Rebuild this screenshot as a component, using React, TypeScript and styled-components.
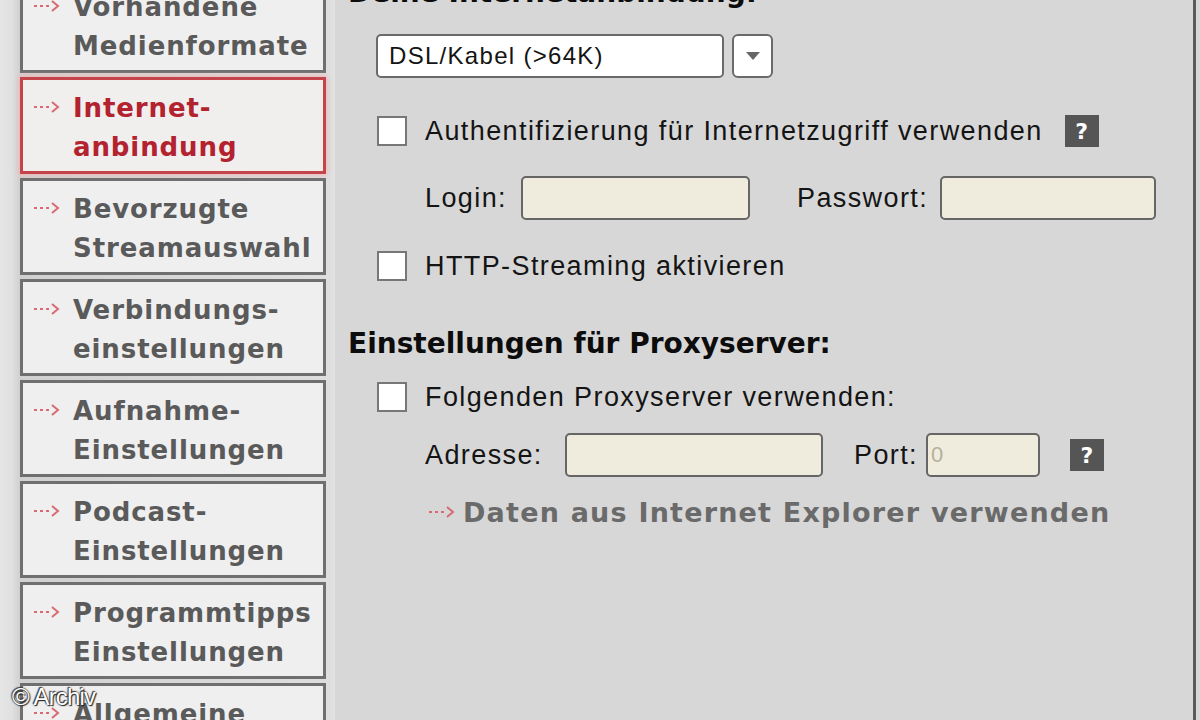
import styled, { createGlobalStyle } from "styled-components";

const GlobalStyle = createGlobalStyle`
  html, body {
    margin: 0;
    padding: 0;
    width: 1200px;
    height: 720px;
    overflow: hidden;
    background: #d7d7d7;
  }
  * {
    box-sizing: border-box;
  }
`;

const Page = styled.div`
  position: relative;
  display: flex;
  width: 1200px;
  height: 720px;
  overflow: hidden;
`;

const Frame = styled.div`
  display: flex;
  width: 1200px;
  margin-top: -24px;
  height: 760px;
`;

const Sidebar = styled.nav`
  width: 335px;
  flex-shrink: 0;
  display: flex;
  flex-direction: column;
  gap: 4px;
  padding-left: 20px;
  background: linear-gradient(90deg, #e6e6e6 0px, #e0e0e0 12px, #d0d0d0 20px, #dedede 330px, #e2e2e2 335px);
`;

const NavButton = styled.div<{ $active?: boolean }>`
  width: 306px;
  height: 97px;
  flex-shrink: 0;
  display: flex;
  align-items: flex-start;
  gap: 12px;
  padding: 9px 0 0 10px;
  background: ${(p) => (p.$active ? "#f1eeee" : "#efefef")};
  border: ${(p) => (p.$active ? "3px solid #c4444a" : "3px solid #6f6f6f")};
  box-shadow: ${(p) => (p.$active ? "0 0 5px 1px #f2b4b4" : "none")};
`;

const NavText = styled.div<{ $active?: boolean }>`
  font-family: "DejaVu Sans", Verdana, sans-serif;
  font-weight: bold;
  font-size: 26px;
  line-height: 39px;
  letter-spacing: 0.9px;
  color: ${(p) => (p.$active ? "#b3222f" : "#5a5a5a")};
  white-space: nowrap;
`;

const ArrowWrap = styled.span`
  display: flex;
  align-items: center;
  height: 36px;
  flex-shrink: 0;
`;

const Arrow = ({ width = 28 }: { width?: number }) => (
  <svg width={width} height="14" viewBox="0 0 28 14">
    <g fill="#d86a72">
      <rect x="1" y="6" width="3" height="2" />
      <rect x="7" y="6" width="3" height="2" />
      <rect x="13" y="6" width="3" height="2" />
    </g>
    <path d="M19 2 L25 7 L19 12" fill="none" stroke="#d86a72" strokeWidth="2" />
  </svg>
);

const Main = styled.main`
  flex: 1;
  display: flex;
  flex-direction: column;
  padding: 0 0 0 13px;
  border-right: 3px solid #5a5a5a;
  margin-right: 4px;
  font-family: "Liberation Sans", Tahoma, sans-serif;
  font-size: 27px;
  letter-spacing: 1.4px;
  color: #141414;
`;

const Heading = styled.h2<{ $mt?: number }>`
  margin: ${(p) => p.$mt ?? 0}px 0 0 0;
  font-family: "DejaVu Sans", Verdana, sans-serif;
  font-weight: bold;
  font-size: 28px;
  line-height: 34px;
  height: 34px;
  letter-spacing: 0;
  color: #0c0c0c;
  white-space: nowrap;
`;

const SelectRow = styled.div`
  display: flex;
  gap: 8px;
  margin: 24px 0 0 28px;
`;

const SelectBox = styled.div`
  width: 348px;
  height: 44px;
  display: flex;
  align-items: center;
  padding-left: 11px;
  background: #ffffff;
  border: 2px solid #6a6a6a;
  border-radius: 5px;
  font-size: 24px;
  letter-spacing: 1.3px;
`;

const SelectButton = styled.div`
  width: 41px;
  height: 44px;
  display: flex;
  align-items: center;
  justify-content: center;
  background: #ffffff;
  border: 2px solid #6a6a6a;
  border-radius: 6px;
`;

const CheckRow = styled.div<{ $mt: number }>`
  display: flex;
  align-items: center;
  height: 34px;
  margin: ${(p) => p.$mt}px 0 0 29px;
  gap: 18px;
  white-space: nowrap;
`;

const CheckBox = styled.span`
  width: 30px;
  height: 30px;
  flex-shrink: 0;
  background: #ffffff;
  border: 2px solid #777;
`;

const FieldRow = styled.div<{ $mt: number }>`
  display: flex;
  align-items: center;
  height: 44px;
  margin: ${(p) => p.$mt}px 0 0 77px;
  white-space: nowrap;
`;

const FieldLabel = styled.span<{ $w: number; $ml?: number }>`
  width: ${(p) => p.$w}px;
  flex-shrink: 0;
  margin-left: ${(p) => p.$ml ?? 0}px;
`;

const TextInput = styled.div<{ $w: number }>`
  width: ${(p) => p.$w}px;
  height: 44px;
  flex-shrink: 0;
  display: flex;
  align-items: center;
  padding-left: 3px;
  background: #efecdd;
  border: 2px solid #666;
  border-radius: 5px;
  color: #b5b09a;
  font-size: 22px;
`;

const Help = styled.span<{ $ml: number }>`
  width: 34px;
  height: 32px;
  flex-shrink: 0;
  margin-left: ${(p) => p.$ml}px;
  display: flex;
  align-items: center;
  justify-content: center;
  background: #555;
  color: #fff;
  font-family: "DejaVu Sans", Verdana, sans-serif;
  font-weight: bold;
  font-size: 22px;
  letter-spacing: 0;
`;

const LinkRow = styled.div`
  display: flex;
  align-items: center;
  height: 32px;
  gap: 6px;
  margin: 19px 0 0 79px;
  font-family: "DejaVu Sans", Verdana, sans-serif;
  font-weight: bold;
  font-size: 27px;
  letter-spacing: 1.2px;
  color: #6a6a6a;
  white-space: nowrap;
`;

const Credit = styled.div`
  position: absolute;
  left: 12px;
  top: 683px;
  font-family: "Liberation Sans", Arial, sans-serif;
  font-size: 24px;
  color: #ffffff;
  letter-spacing: -0.8px;
  text-shadow: 0 0 2px #222, 1px 1px 1px #222, -1px -1px 1px #444;
`;

const navItems = [
  ["Vorhandene", "Medienformate"],
  ["Internet-", "anbindung"],
  ["Bevorzugte", "Streamauswahl"],
  ["Verbindungs-", "einstellungen"],
  ["Aufnahme-", "Einstellungen"],
  ["Podcast-", "Einstellungen"],
  ["Programmtipps", "Einstellungen"],
  ["Allgemeine", "Einstellungen"],
];

export default function App() {
  return (
    <Page>
      <GlobalStyle />
      <Frame>
        <Sidebar>
          {navItems.map((lines, i) => (
            <NavButton key={i} $active={i === 1}>
              <ArrowWrap>
                <Arrow />
              </ArrowWrap>
              <NavText $active={i === 1}>
                {lines[0]}
                <br />
                {lines[1]}
              </NavText>
            </NavButton>
          ))}
        </Sidebar>
        <Main>
          <Heading>Deine Internetanbindung:</Heading>
          <SelectRow>
            <SelectBox>DSL/Kabel (&gt;64K)</SelectBox>
            <SelectButton>
              <svg width="16" height="10" viewBox="0 0 16 10">
                <path d="M1 1 L15 1 L8 9 Z" fill="#666" />
              </svg>
            </SelectButton>
          </SelectRow>
          <CheckRow $mt={36}>
            <CheckBox />
            <span>Authentifizierung für Internetzugriff verwenden</span>
            <Help $ml={4}>?</Help>
          </CheckRow>
          <FieldRow $mt={28}>
            <FieldLabel $w={96}>Login:</FieldLabel>
            <TextInput $w={229} />
            <FieldLabel $ml={47} $w={143}>Passwort:</FieldLabel>
            <TextInput $w={216} />
          </FieldRow>
          <CheckRow $mt={29}>
            <CheckBox />
            <span>HTTP-Streaming aktivieren</span>
          </CheckRow>
          <Heading $mt={44}>Einstellungen für Proxyserver:</Heading>
          <CheckRow $mt={19}>
            <CheckBox />
            <span>Folgenden Proxyserver verwenden:</span>
          </CheckRow>
          <FieldRow $mt={19}>
            <FieldLabel $w={140}>Adresse:</FieldLabel>
            <TextInput $w={258} />
            <FieldLabel $ml={31} $w={72}>Port:</FieldLabel>
            <TextInput $w={114}>0</TextInput>
            <Help $ml={30}>?</Help>
          </FieldRow>
          <LinkRow>
            <Arrow width={30} />
            <span>Daten aus Internet Explorer verwenden</span>
          </LinkRow>
        </Main>
      </Frame>
      <Credit>© Archiv</Credit>
    </Page>
  );
}
